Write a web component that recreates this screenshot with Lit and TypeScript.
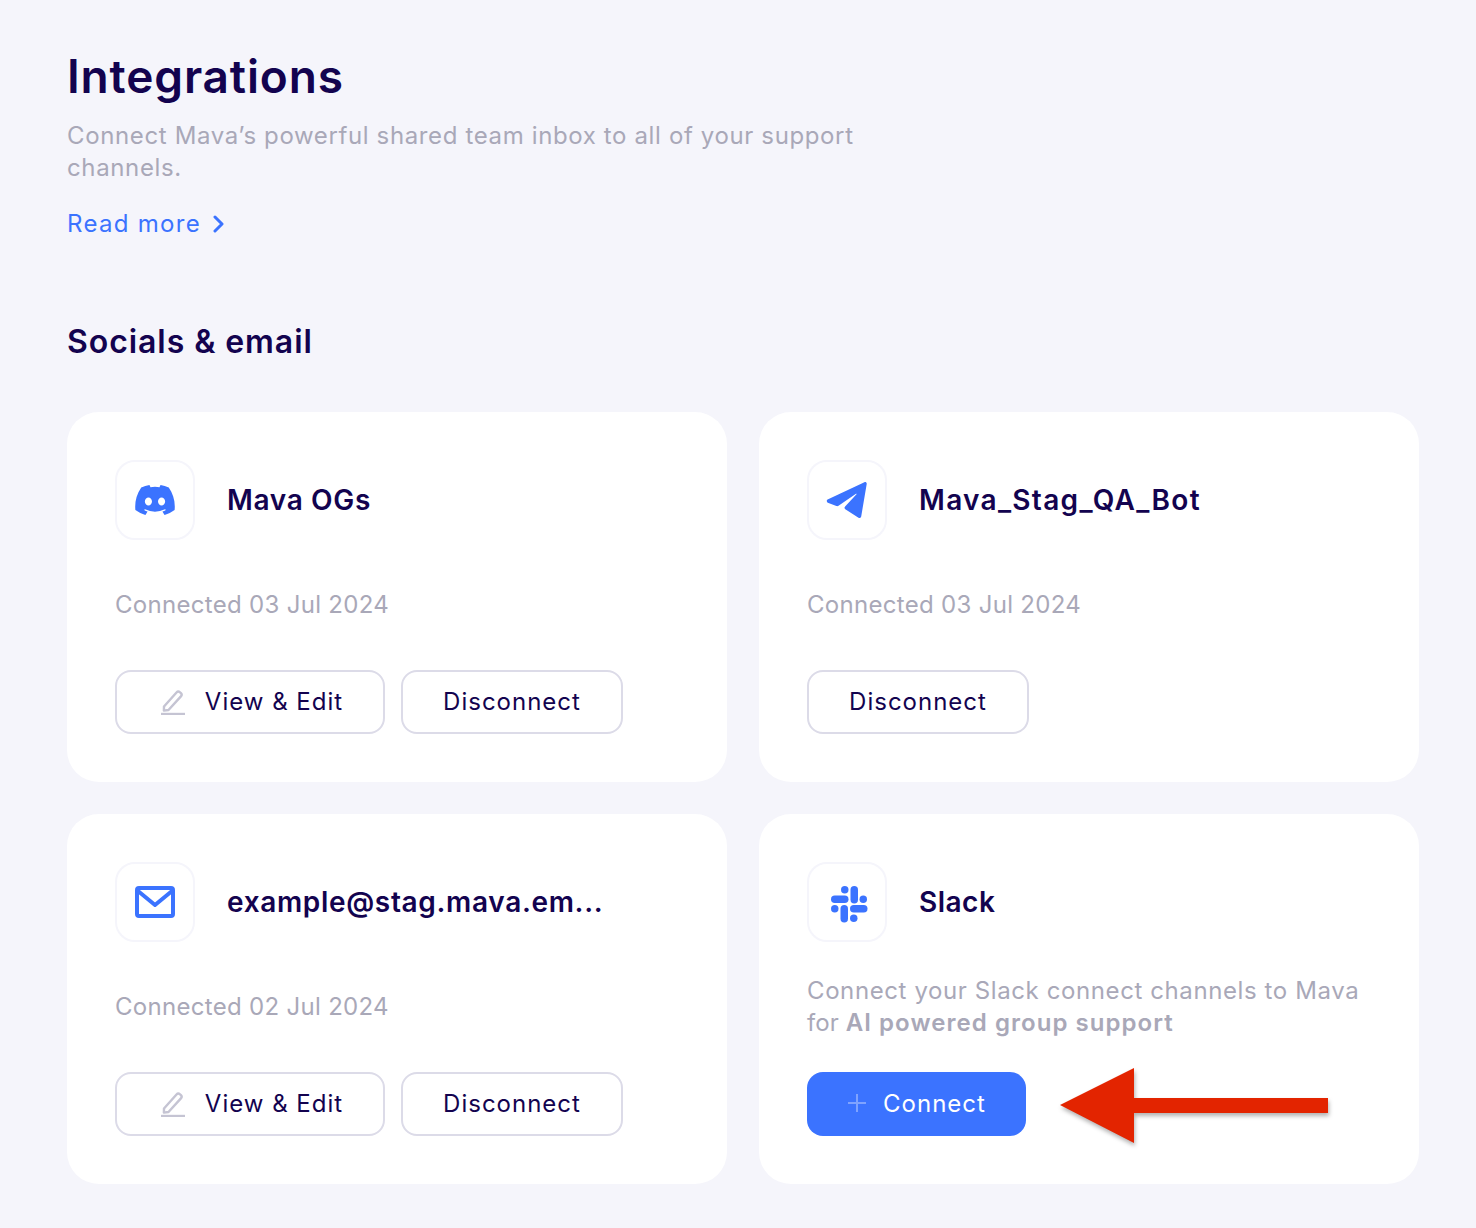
import { LitElement, html, css, svg } from "lit";
import { customElement } from "lit/decorators.js";

const discord = svg`<svg width="42" height="30" viewBox="0 0 127.14 96.36" fill="#3b73ff"><path d="M107.7 8.07A105.15 105.15 0 0 0 81.47 0a72.06 72.06 0 0 0-3.36 6.83 97.68 97.68 0 0 0-29.11 0A72.37 72.37 0 0 0 45.64 0a105.89 105.89 0 0 0-26.25 8.09C2.79 32.65-1.71 56.6.54 80.21a105.73 105.73 0 0 0 32.17 16.15 77.7 77.7 0 0 0 6.89-11.11 68.42 68.42 0 0 1-10.85-5.18c.91-.66 1.8-1.34 2.66-2a75.57 75.57 0 0 0 64.32 0c.87.71 1.76 1.39 2.66 2a68.68 68.68 0 0 1-10.87 5.19 77 77 0 0 0 6.89 11.1 105.25 105.25 0 0 0 32.19-16.14c2.64-27.38-4.51-51.11-18.9-72.15ZM42.45 65.69C36.18 65.69 31 60 31 53s5-12.74 11.43-12.74S54 46 53.89 53s-5.05 12.69-11.44 12.69Zm42.24 0C78.41 65.69 73.25 60 73.25 53s5-12.74 11.44-12.74S96.23 46 96.12 53s-5.04 12.69-11.43 12.69Z"/></svg>`;
const telegram = svg`<svg width="42" height="38" viewBox="0 0 42 38"><path d="M1.6 18.6 38.4 1.2c1.2-.5 2.5.4 2.3 1.7L35.2 35.500c-.2 1.300-1.600 1.900-2.700 1.200L19.300 28.300c-1-.6-1.100-2-.2-2.800L30.500 13.300c.3-.4-.1-.8-.5-.5L12.500 24.800c-.6.400-1.400.5-2.100.3L1.800 21.700c-1.300-.5-1.400-2.500-.2-3.100Z" fill="#3b73ff"/></svg>`;
const mail = svg`<svg width="40" height="32" viewBox="0 0 40 32" fill="none" stroke="#3b73ff" stroke-width="4" stroke-linejoin="round" stroke-linecap="round"><rect x="2" y="2" width="36" height="28" rx="2"/><path d="M3 5 20 19 37 5"/></svg>`;
const slack = svg`<svg class="slackicon" width="38" height="38" viewBox="0 0 38 38" fill="#3b73ff"><rect x="11" y="1" width="7.500" height="7.500" rx="3.750"/><rect x="1" y="10.500" width="17.500" height="7.500" rx="3.750"/><rect x="20.500" y="1" width="7.500" height="17.500" rx="3.750"/><rect x="29.500" y="10.500" width="7.500" height="7.500" rx="3.750"/><rect x="1" y="20" width="7.500" height="7.500" rx="3.750"/><rect x="10.500" y="20" width="7.500" height="17.500" rx="3.750"/><rect x="20" y="20" width="17.500" height="7.500" rx="3.750"/><rect x="20" y="29.500" width="7.500" height="7.500" rx="3.750"/></svg>`;
const pencil = svg`<svg width="24" height="26" viewBox="0 0 24 26" fill="none" stroke="#c5c4d3" stroke-width="2.400"><path d="M3 17.500 15.500 3.500a2.500 2.500 0 0 1 3.500-.2l.7.6a2.500 2.500 0 0 1 .2 3.500L7.500 21l-4.600.6Z" stroke-linejoin="round"/><path d="M0 25h24"/></svg>`;

@customElement("app-root")
export class AppRoot extends LitElement {
  static styles = css`
    :host {
      display: block;
      min-height: 1228px;
      box-sizing: border-box;
      background: #f5f5fb;
      padding: 52px 57px 44px 67px;
      font-family: Inter, "Liberation Sans", sans-serif;
      color: #13034f;
    }
    h1 { margin: 0; font-size: 46px; line-height: 48px; font-weight: 600; letter-spacing: 0.85px; }
    .sub { margin: 20px 0 0; width: 800px; font-size: 24px; line-height: 32px; color: #a9a8b8; font-weight: 400; letter-spacing: 0.63px; }
    .more { margin-top: 24px; display: flex; align-items: center; gap: 12px; font-size: 24px; line-height: 32px; color: #3b73ff; letter-spacing: 1.3px; }
    h2 { margin: 82px 0 0; font-size: 32px; line-height: 40px; font-weight: 600; letter-spacing: 0.93px; }
    .grid { margin-top: 50px; display: grid; grid-template-columns: 660px 660px; gap: 32px; }
    .card { position: relative; background: #fff; border-radius: 32px; padding: 48px; height: 370px; box-sizing: border-box; }
    .head { display: flex; align-items: center; gap: 32px; height: 80px; }
    .icon { width: 80px; height: 80px; box-sizing: border-box; border: 2px solid #f5f5fb; border-radius: 20px; display: flex; align-items: center; justify-content: center; flex: none; }
    .slackicon { margin: 3px 0 0 3px; }
    .name { font-size: 28px; font-weight: 600; letter-spacing: 0.67px; white-space: nowrap; }
    .name.wide { letter-spacing: 1.3px; }
    .name.slack { letter-spacing: 0.5px; }
    .desc { height: 130px; display: flex; align-items: center; font-size: 24px; line-height: 32px; color: #a9a8b8; letter-spacing: 0.3px; }
    .long { display: block; letter-spacing: 0.6px; }
    .lead { letter-spacing: 0.1px; }
    .long b { font-weight: 600; letter-spacing: 1.05px; }
    .btns { display: flex; gap: 16px; }
    .btn { height: 64px; box-sizing: border-box; border: 2px solid #dcdbe8; border-radius: 16px; padding-bottom: 2px; display: flex; align-items: center; justify-content: center; font-size: 24px; letter-spacing: 1px; color: #13034f; }
    .edit { width: 270px; gap: 20px; padding-left: 4px; }
    .edit svg { margin-top: 2px; }
    .disc { width: 222px; }
    .conn { width: 219px; border: 0; background: #3b73ff; color: #fff; gap: 16px; }
    .arrow { position: absolute; left: 299px; top: 252px; filter: drop-shadow(1px 3px 2px rgba(0,0,0,.3)); }
  `;

  private card(icon: unknown, name: string, date: string, edit: boolean, wide = false) {
    return html`<div class="card">
      <div class="head"><div class="icon">${icon}</div><div class="name ${wide ? "wide" : ""}">${name}</div></div>
      <div class="desc">Connected ${date}</div>
      <div class="btns">
        ${edit ? html`<div class="btn edit">${pencil}<span>View &amp; Edit</span></div>` : ""}
        <div class="btn disc">Disconnect</div>
      </div>
    </div>`;
  }

  render() {
    return html`
      <h1>Integrations</h1>
      <p class="sub">Connect Mava’s powerful shared team inbox to all of your support channels.</p>
      <div class="more">Read more
        <svg width="11" height="18" viewBox="0 0 11 18" fill="none" stroke="#3b73ff" stroke-width="3" stroke-linecap="round" stroke-linejoin="round"><path d="M2 2l7 7-7 7"/></svg>
      </div>
      <h2>Socials &amp; email</h2>
      <div class="grid">
        ${this.card(discord, "Mava OGs", "03 Jul 2024", true)}
        ${this.card(telegram, "Mava_Stag_QA_Bot", "03 Jul 2024", false, true)}
        ${this.card(mail, "example@stag.mava.em...", "02 Jul 2024", true)}
        <div class="card">
          <div class="head"><div class="icon">${slack}</div><div class="name slack">Slack</div></div>
          <div class="desc">
            <div>
              <div class="long">Connect your Slack connect channels to Mava</div>
              <div class="long"><span class="lead">for </span><b>AI powered group support</b></div>
            </div>
          </div>
          <div class="btns">
            <div class="btn conn">
              <svg width="20" height="20" viewBox="0 0 20 20" stroke="#7fa3ff" stroke-width="2"><path d="M10 1v18M1 10h18"/></svg>
              <span>Connect</span>
            </div>
          </div>
          <svg class="arrow" width="274" height="80" viewBox="0 0 274 80"><path d="M2 39 76 2v30h194v15H76v30Z" fill="#e32400"/></svg>
        </div>
      </div>
    `;
  }
}
